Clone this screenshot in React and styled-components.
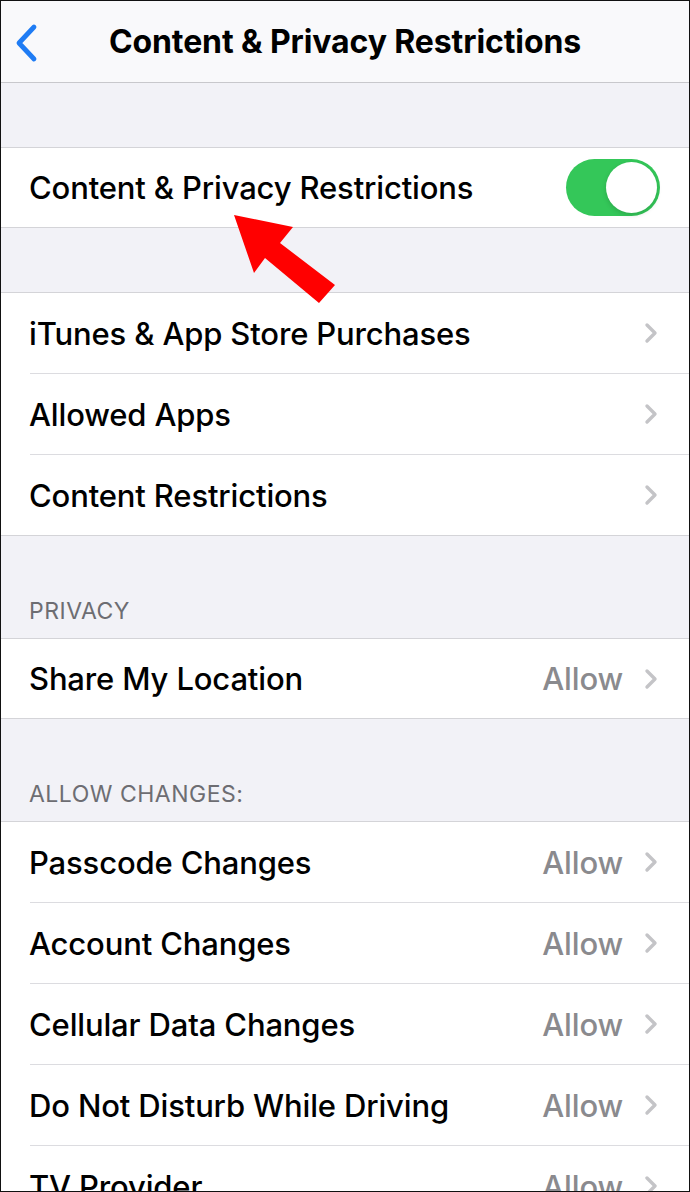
import React, { useState } from 'react'
import styled, { createGlobalStyle } from 'styled-components'

const GlobalStyle = createGlobalStyle`
  html, body {
    margin: 0;
    padding: 0;
    background: #f2f2f7;
  }
  * {
    box-sizing: border-box;
  }
`

const privacyRows = [{ label: 'Share My Location', value: 'Allow' }]

const changeRows = [
  { label: 'Passcode Changes', value: 'Allow' },
  { label: 'Account Changes', value: 'Allow' },
  { label: 'Cellular Data Changes', value: 'Allow' },
  { label: 'Do Not Disturb While Driving', value: 'Allow' },
  { label: 'TV Provider', value: 'Allow' },
]

const storeRows = [
  { label: 'iTunes & App Store Purchases' },
  { label: 'Allowed Apps' },
  { label: 'Content Restrictions' },
]

const Chevron = () => (
  <ChevronIcon viewBox="0 0 16 24">
    <path d="M4 4 L12 12 L4 20" fill="none" stroke="#c4c4c7" strokeWidth="3.4" strokeLinecap="round" strokeLinejoin="round" />
  </ChevronIcon>
)

const SettingsRow = ({ label, value, first, height, children }) => (
  <Row>
    <RowInner first={first} height={height}>
      <Label>{label}</Label>
      {children}
      {value && <Value>{value}</Value>}
      {!children && <Chevron />}
    </RowInner>
  </Row>
)

const App = () => {
  const [on, setOn] = useState(true)

  return (
    <Page>
      <GlobalStyle />
      <Header>
        <BackButton>
          <svg width="30" height="42" viewBox="0 0 30 42">
            <path d="M22 5 L7 21 L22 37" fill="none" stroke="#1f7cf4" strokeWidth="4.8" strokeLinecap="round" strokeLinejoin="round" />
          </svg>
        </BackButton>
        <Title>Content &amp; Privacy Restrictions</Title>
      </Header>

      <Gap />
      <Group>
        <SettingsRow label="Content & Privacy Restrictions" first height={79}>
          <Toggle on={on} onClick={() => setOn(!on)}>
            <Knob on={on} />
          </Toggle>
        </SettingsRow>
      </Group>

      <Gap />
      <Group>
        {storeRows.map((r, i) => (
          <SettingsRow key={r.label} label={r.label} first={i === 0} />
        ))}
      </Group>

      <SectionHeader>PRIVACY</SectionHeader>
      <Group>
        {privacyRows.map((r, i) => (
          <SettingsRow key={r.label} label={r.label} value={r.value} first={i === 0} height={79} />
        ))}
      </Group>

      <SectionHeader>ALLOW CHANGES:</SectionHeader>
      <Group>
        {changeRows.map((r, i) => (
          <SettingsRow key={r.label} label={r.label} value={r.value} first={i === 0} />
        ))}
      </Group>

      <Arrow viewBox="0 0 690 1192">
        <polygon points="233,214 292,226 279,242 334,284 318,302 264,257 253,272" fill="#ff0000" />
      </Arrow>
    </Page>
  )
}

export default App

const Page = styled.div`
  position: relative;
  width: 690px;
  height: 1192px;
  overflow: hidden;
  background: #f2f2f7;
  border: 1px solid #111;
  font-family: Inter, "Liberation Sans", sans-serif;
  color: #000;
`

const Header = styled.div`
  position: relative;
  height: 82px;
  display: flex;
  align-items: center;
  justify-content: center;
  background: #f9f9fb;
  border-bottom: 1px solid #c8c8cc;
`

const BackButton = styled.div`
  position: absolute;
  left: 11px;
  top: 21px;
  display: flex;
`

const Title = styled.div`
  font-size: 32px;
  font-weight: 700;
  letter-spacing: -0.1px;
`

const Gap = styled.div`
  height: 64px;
`

const SectionHeader = styled.div`
  height: 102px;
  display: flex;
  align-items: flex-end;
  padding: 0 28px 13px;
  font-size: 23px;
  color: #6d6d72;
  letter-spacing: 0.5px;
`

const Group = styled.div`
  background: #fff;
  border-top: 1px solid #d4d4d8;
  border-bottom: 1px solid #d4d4d8;
`

const Row = styled.div`
  padding-left: 29px;
  background: #fff;
`

const RowInner = styled.div`
  height: ${p => (p.height ? `${p.height}px` : p.first ? '80px' : '81px')};
  display: flex;
  align-items: center;
  padding-right: 30px;
  border-top: ${p => (p.first ? 'none' : '1px solid #dcdce0')};
`

const Label = styled.div`
  flex: 1;
  margin-left: -1px;
  font-size: 31px;
  font-weight: 500;
  letter-spacing: -0.15px;
`

const Value = styled.div`
  font-size: 31px;
  font-weight: 500;
  letter-spacing: -0.15px;
  color: #8a8a8e;
  margin-right: 20px;
`

const ChevronIcon = styled.svg`
  width: 16px;
  height: 24px;
`

const Toggle = styled.div`
  width: 94px;
  height: 57px;
  margin-right: -1px;
  border-radius: 29px;
  background: ${p => (p.on ? '#34c759' : '#e9e9eb')};
  padding: 3px;
  display: flex;
  justify-content: ${p => (p.on ? 'flex-end' : 'flex-start')};
  cursor: pointer;
`

const Knob = styled.div`
  width: 51px;
  height: 51px;
  border-radius: 50%;
  background: #fff;
  box-shadow: 0 2px 5px rgba(0, 0, 0, 0.15);
`

const Arrow = styled.svg`
  position: absolute;
  left: 0;
  top: 0;
  width: 690px;
  height: 1192px;
  pointer-events: none;
`
